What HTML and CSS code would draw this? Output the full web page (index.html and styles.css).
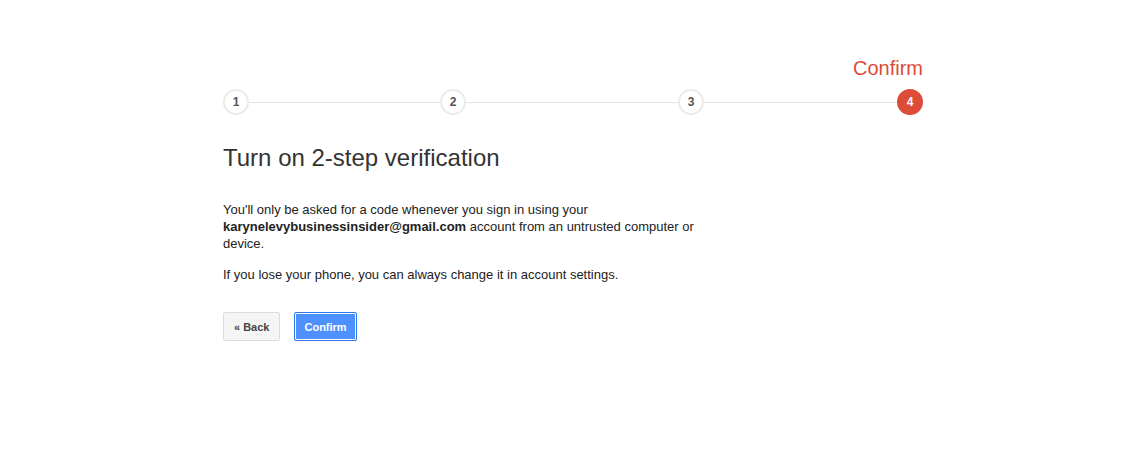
FILE: index.html
```html
<!DOCTYPE html>
<html lang="en">
<head>
  <meta charset="UTF-8" />
  <title>2-Step Verification</title>
  <link rel="stylesheet" href="styles.css">
</head>
<body>

  <div class="wizard">
    <div class="step-label">Confirm</div>

    <div class="steps">
      <span class="step">1</span>
      <span class="bar" style="flex-grow: 191"></span>
      <span class="step">2</span>
      <span class="bar" style="flex-grow: 212"></span>
      <span class="step">3</span>
      <span class="bar" style="flex-grow: 193"></span>
      <span class="step active">4</span>
    </div>

    <h1>Turn on 2-step verification</h1>

    <p class="note">
      You'll only be asked for a code whenever you sign in using your
      <b>karynelevybusinessinsider@gmail.com</b> account from an untrusted computer or
      device.
    </p>
    <p class="note">If you lose your phone, you can always change it in account settings.</p>

    <div class="actions">
      <button class="btn">&laquo; Back</button>
      <button class="btn btn-primary">Confirm</button>
    </div>
  </div>

</body>
</html>
```

FILE: styles.css
```css
body {
  margin: 0;
  font-family: Arial, "Liberation Sans", sans-serif;
  color: #222;
  background: #fff;
}

.wizard {
  width: 706px;
  margin: 0 auto;
  padding: 54px 0 0 6px;
  box-sizing: border-box;
}

.step-label {
  text-align: right;
  font-size: 20px;
  line-height: 28px;
  color: #dd4b39;
}

.steps {
  display: flex;
  align-items: center;
  margin-top: 7px;
}

.step {
  width: 22px;
  height: 22px;
  border: 2px solid #ebebeb;
  border-radius: 50%;
  background: #fff;
  color: #555;
  font-size: 12px;
  font-weight: bold;
  line-height: 22px;
  text-align: center;
}

.step.active {
  background: #dd4b39;
  border-color: #dd4b39;
  color: #fff;
}

.bar {
  height: 1px;
  background: #e5e5e5;
}

h1 {
  margin: 27px 0 0;
  font-size: 24px;
  font-weight: normal;
  line-height: 32px;
  color: #333;
}

.note {
  margin: 27px 0 0;
  font-size: 13px;
  line-height: 17px;
  color: #222;
  width: 480px;
}

.note + .note {
  margin-top: 14px;
}

.actions {
  display: flex;
  gap: 14px;
  margin-top: 29px;
}

.btn {
  height: 29px;
  padding: 0 10px;
  font-family: inherit;
  font-size: 11px;
  font-weight: bold;
  color: #444;
  background: #f5f5f5;
  border: 1px solid #dcdcdc;
  border-radius: 2px;
}

.btn-primary {
  color: #fff;
  background: #4d90fe;
  border-color: #3079ed;
  box-shadow: inset 0 0 0 1px #fff;
  padding: 0 9px;
}
```
